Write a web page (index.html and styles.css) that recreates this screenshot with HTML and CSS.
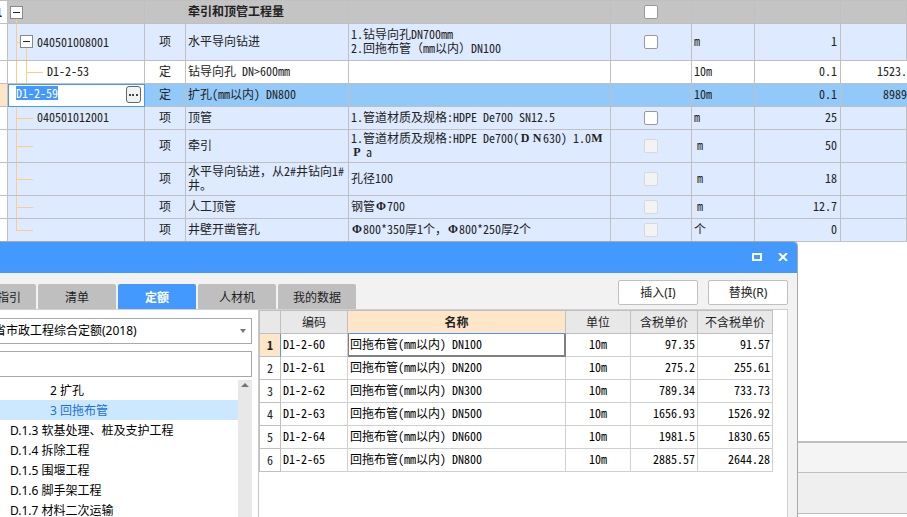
FILE: index.html
```html
<!DOCTYPE html>
<html lang="zh-CN">
<head>
<meta charset="utf-8">
<title>牵引和顶管工程量</title>
<link rel="stylesheet" href="styles.css">
</head>
<body>
<main class="sheet-area">
<table class="grid sheet">
<colgroup><col class="c-gutter"><col class="c-code"><col class="c-kind"><col class="c-name"><col class="c-spec"><col class="c-check"><col class="c-unit"><col class="c-qty"><col class="c-price"></colgroup>
<tbody>
<tr class="group"><th class="gutter">1</th><td class="tree root"><button class="toggle" aria-label="折叠"></button></td><td></td><td>牵引和顶管工程量</td><td></td><td class="check"><input type="checkbox" aria-label="牵引和顶管工程量"></td><td></td><td></td><td></td></tr>
<tr class="tall"><th class="gutter"></th><td class="tree branch-open"><button class="toggle nested" aria-label="折叠"></button><span>040501008001</span></td><td class="mid">项</td><td>水平导向钻进</td><td>1.钻导向孔DN700mm<br>2.回拖布管<span class="full">（</span>mm以内<span class="full">）</span>DN100</td><td class="check"><input type="checkbox" aria-label="水平导向钻进"></td><td>m</td><td class="num">1</td><td></td></tr>
<tr class="plain"><th class="gutter"></th><td class="tree leaf-deep">D1-2-53</td><td class="mid">定</td><td>钻导向孔 DN&gt;600mm</td><td></td><td></td><td>10m</td><td class="num">0.1</td><td class="price">1523.</td></tr>
<tr class="current"><th class="gutter"></th><td class="editing"><div class="editor"><input class="code-input" type="text" value="D1-2-59" aria-label="编码"><button class="more" aria-label="选择"><svg viewBox="0 0 15 17" width="15" height="17"><path d="M3 8h2v2H3zM6 8h2v2H6zM10 8h2v2h-2z" fill="#444"/></svg></button></div></td><td class="mid">定</td><td>扩孔(mm以内) DN800</td><td></td><td></td><td>10m</td><td class="num">0.1</td><td class="price">8989</td></tr>
<tr><th class="gutter"></th><td class="tree leaf">040501012001</td><td class="mid">项</td><td>顶管</td><td>1.管道材质及规格:HDPE De700 SN12.5</td><td class="check"><input type="checkbox" aria-label="顶管"></td><td>m</td><td class="num">25</td><td></td></tr>
<tr class="double"><th class="gutter"></th><td class="tree leaf"></td><td class="mid">项</td><td>牵引</td><td>1.管道材质及规格:HDPE De700(<b class="wide">D</b><b class="wide">N</b>630) 1.0<b class="wide">M</b><br><b class="wide">P</b><span class="wide-plain">a</span></td><td class="check"><input type="checkbox" disabled aria-label="牵引"></td><td><span class="wide-plain">m</span></td><td class="num">50</td><td></td></tr>
<tr class="double"><th class="gutter"></th><td class="tree leaf"></td><td class="mid">项</td><td>水平导向钻进<span class="full">，</span>从2#井钻向1#<br>井。</td><td>孔径100</td><td class="check"><input type="checkbox" disabled aria-label="水平导向钻进"></td><td><span class="wide-plain">m</span></td><td class="num">18</td><td></td></tr>
<tr><th class="gutter"></th><td class="tree leaf"></td><td class="mid">项</td><td>人工顶管</td><td>钢管<b class="wide">Φ</b>700</td><td class="check"><input type="checkbox" disabled aria-label="人工顶管"></td><td><span class="wide-plain">m</span></td><td class="num">12.7</td><td></td></tr>
<tr><th class="gutter"></th><td class="tree leaf last"></td><td class="mid">项</td><td>井壁开凿管孔</td><td><b class="wide">Φ</b>800*350厚1个<span class="full">，</span><b class="wide">Φ</b>800*250厚2个</td><td class="check"><input type="checkbox" disabled aria-label="井壁开凿管孔"></td><td>个</td><td class="num">0</td><td></td></tr>
</tbody>
</table>
</main>
<footer class="status">
<div class="status-tabs"></div>
<div class="status-tools"></div>
</footer>

<section class="dialog" role="dialog" aria-label="定额">
<header class="titlebar">
<button class="win-btn" aria-label="最大化"><svg width="10" height="8" viewBox="0 0 10 8"><path d="M1 1h8v6H1z" fill="none" stroke="#fff" stroke-width="2"/></svg></button>
<button class="win-btn" aria-label="关闭"><svg width="10" height="8" viewBox="0 0 10 8"><path d="M1 0l8 8M9 0L1 8" fill="none" stroke="#fff" stroke-width="2"/></svg></button>
</header>
<div class="toolbar">
<nav class="tabs"><button class="tab first">指引</button><button class="tab">清单</button><button class="tab active">定额</button><button class="tab">人材机</button><button class="tab">我的数据</button></nav>
<div class="actions"><button class="action">插入(I)</button><button class="action">替换(R)</button></div>
</div>
<div class="panes">
<aside class="side">
<div class="field"><select aria-label="定额库"><option>省市政工程综合定额(2018)</option></select><svg class="caret" width="6" height="4" viewBox="0 0 6 4"><path d="M0 0h6L3 4z" fill="#777"/></svg></div>
<input class="search" type="text" aria-label="搜索">
<div class="tree-box">
<ul class="outline">
<li class="child">2 扩孔</li>
<li class="child selected">3 回拖布管</li>
<li>D.1.3 软基处理、桩及支护工程</li>
<li>D.1.4 拆除工程</li>
<li>D.1.5 围堰工程</li>
<li>D.1.6 脚手架工程</li>
<li>D.1.7 材料二次运输</li>
</ul>
<div class="scroll"><svg width="8" height="4" viewBox="0 0 8 4"><path d="M0 4h8L4 0z" fill="#74747e"/></svg></div>
</div>
</aside>
<div class="results">
<table class="grid quota">
<colgroup><col class="q-no"><col class="q-code"><col class="q-name"><col class="q-unit"><col class="q-tax"><col class="q-net"></colgroup>
<thead><tr><th></th><th>编码</th><th class="sorted">名称</th><th>单位</th><th>含税单价</th><th>不含税单价</th></tr></thead>
<tbody>
<tr class="picked"><th>1</th><td>D1-2-60</td><td class="focus">回拖布管(mm以内) DN100</td><td class="mid">10m</td><td class="num">97.35</td><td class="num">91.57</td></tr>
<tr><th>2</th><td>D1-2-61</td><td>回拖布管(mm以内) DN200</td><td class="mid">10m</td><td class="num">275.2</td><td class="num">255.61</td></tr>
<tr><th>3</th><td>D1-2-62</td><td>回拖布管(mm以内) DN300</td><td class="mid">10m</td><td class="num">789.34</td><td class="num">733.73</td></tr>
<tr><th>4</th><td>D1-2-63</td><td>回拖布管(mm以内) DN500</td><td class="mid">10m</td><td class="num">1656.93</td><td class="num">1526.92</td></tr>
<tr><th>5</th><td>D1-2-64</td><td>回拖布管(mm以内) DN600</td><td class="mid">10m</td><td class="num">1981.5</td><td class="num">1830.65</td></tr>
<tr><th>6</th><td>D1-2-65</td><td>回拖布管(mm以内) DN800</td><td class="mid">10m</td><td class="num">2885.57</td><td class="num">2644.28</td></tr>
</tbody>
</table>
</div>
</div>
</section>
</body>
</html>
```
FILE: styles.css
```css
:root {
  --line: #c0c0c0;
  --blue: #4499ff;
  --peach: #ffe6c8;
  --guide: linear-gradient(#ffcc80, #ffcc80);
}
* { box-sizing: border-box; }
html, body { height: 100%; }
body {
  margin: 0;
  overflow: hidden;
  display: flex;
  flex-direction: column;
  background: #fff;
  color: #222;
  font: 12px/14px "Noto Sans CJK SC", sans-serif;
}
button, input, select { font: inherit; color: inherit; margin: 0; }

/* Shared grid */
.grid {
  width: 100%;
  table-layout: fixed;
  border-collapse: separate;
  border-spacing: 0;
  font-feature-settings: "hwid" 1;
}
.grid th, .grid td {
  height: 23px;
  padding: 0 2px 2px;
  border: 0 solid var(--line);
  border-width: 0 1px 1px 0;
  text-align: left;
  vertical-align: middle;
  font-weight: 400;
  white-space: nowrap;
  overflow: hidden;
}
.grid .mid { text-align: center; }
.grid .num { text-align: right; padding-right: 3px; }

/* Bill sheet */
.sheet-area { flex: 1; }
.sheet { border-top: 1px solid var(--line); }
.c-gutter { width: 8px; }
.c-code { width: 137px; }
.c-kind { width: 41px; }
.c-name { width: 163px; }
.c-check { width: 81px; }
.c-unit { width: 63px; }
.c-qty { width: 86px; }
.c-price { width: 66px; }
.sheet td { background-color: #deeaff; }
.sheet .gutter { padding: 0; text-indent: -4px; background: #fff; font-weight: 700; }
.sheet .group td { background-color: #c4c4c4; font-weight: 700; }
.sheet .plain td { background-color: #fff; }
.sheet .current td { background-color: #93c9f8; }
.sheet .current .gutter { background: var(--peach); }
.sheet .tall td { height: 37px; }
.sheet .double td { height: 33px; }
.sheet .price { padding: 0 0 2px; border-right: 0; text-align: right; }
.sheet .check { padding: 0; }

.sheet .tree { background-repeat: no-repeat; }
.root {
  background-image: var(--guide);
  background-position: 8px 100%;
  background-size: 1px 50%;
}
.branch-open {
  background-image: var(--guide), var(--guide), var(--guide);
  background-position: 8px 0, 8px 50%, 18px 100%;
  background-size: 1px 100%, 5px 1px, 1px 50%;
}
.leaf-deep {
  background-image: var(--guide), var(--guide), var(--guide);
  background-position: 8px 0, 18px 50%, 18px 0;
  background-size: 1px 100%, 17px 1px, 1px 100%;
}
.leaf {
  background-image: var(--guide), var(--guide);
  background-position: 8px 0, 8px 50%;
  background-size: 1px 100%, 17px 1px;
}
.last { background-size: 1px 50%, 17px 1px; }
.sheet .leaf { padding-left: 29px; }
.sheet .leaf-deep { padding-left: 39px; }
.branch-open span { vertical-align: middle; }
.toggle {
  width: 13px;
  height: 13px;
  padding: 0;
  border: 1px solid #888;
  border-radius: 0;
  vertical-align: middle;
  background: linear-gradient(#222, #222) 50% 50% / 7px 1px no-repeat #fff;
}
.toggle.nested { margin: 0 4px 0 10px; }
.sheet input[type="checkbox"] {
  appearance: none;
  display: block;
  width: 14px;
  height: 14px;
  margin: 0 auto;
  border: 1px solid #999;
  border-radius: 2px;
  background: #fff;
}
.sheet input[type="checkbox"]:disabled { border-color: #d8d8d8; background: #f3f3f3; }

.sheet .editing { padding: 0; border-color: var(--blue); }
.editor {
  display: flex;
  height: 22px;
  padding: 2px 3px 3px 8px;
  background: #fff;
  box-shadow: inset 1px 1px 0 var(--blue);
}
.code-input {
  flex: 1;
  min-width: 0;
  height: 14px;
  padding: 0;
  border: 0;
  outline: 0;
  color: #fff;
  font-feature-settings: "hwid" 1;
  background: linear-gradient(var(--blue), var(--blue)) 0 0 / 42px 100% no-repeat #fff;
}
.more {
  width: 15px;
  height: 17px;
  padding: 0;
  border: 1px solid #666;
  border-radius: 3px;
  background: #f2f2f2;
}
.more svg { display: block; margin: -1px; }
.full { font-feature-settings: normal; }
.wide, .wide-plain {
  display: inline-block;
  width: 12px;
  height: 14px;
  text-align: center;
  vertical-align: top;
}
.wide { font-family: "Liberation Serif", serif; font-weight: 700; }

/* Bottom strips */
.status { height: 76px; border-top: 2px solid #bfbfbf; }
.status-tabs { height: 30px; background: #f4f4f4; border-bottom: 1px solid #bfbfbf; }
.status-tools { height: 41px; background: #efefef; border-bottom: 1px solid #bfbfbf; }

/* Floating lookup window */
.dialog {
  position: absolute;
  top: 241px;
  bottom: 0;
  left: -42px;
  right: 109px;
  display: flex;
  flex-direction: column;
  border: 1px solid #a8a8a8;
  border-width: 1px 1px 0 0;
  border-radius: 0 5px 0 0;
  overflow: hidden;
  background: #f2f2f2;
}
.titlebar {
  display: flex;
  justify-content: flex-end;
  align-items: center;
  gap: 6px;
  height: 31px;
  padding: 0 4px 2px 0;
  background: var(--blue);
}
.win-btn {
  display: flex;
  justify-content: center;
  align-items: center;
  width: 20px;
  height: 20px;
  padding: 0;
  border: 0;
  background: none;
}
.toolbar {
  display: flex;
  justify-content: space-between;
  height: 36px;
  padding-right: 9px;
}
.tabs { display: flex; gap: 2px; align-items: flex-end; }
.tab {
  width: 78px;
  height: 25px;
  padding: 0;
  border: 0;
  border-radius: 2px 2px 0 0;
  background: #bfbfbf;
}
.tab.first { padding-right: 15px; text-align: right; }
.tab.active { background: var(--blue); color: #fff; font-weight: 700; }
.actions { display: flex; gap: 10px; padding-top: 7px; }
.action {
  width: 80px;
  height: 25px;
  padding: 0;
  border: 1px solid #c0c0c0;
  border-radius: 2px;
  background: #fff;
}
.action, .outline, .field select { font-family: "Noto Sans", "Noto Sans CJK SC", sans-serif; }
.panes {
  flex: 1;
  display: flex;
  min-height: 0;
  margin-right: 9px;
  border: 1px solid #d0d0d0;
  border-width: 1px 1px 0 0;
  background: #fff;
}
.side {
  display: flex;
  flex-direction: column;
  width: 300px;
  padding: 8px 6px 0 32px;
  color: #000;
}
.field { display: grid; align-items: center; }
.field select, .field .caret { grid-area: 1 / 1; }
.field select {
  appearance: none;
  width: 100%;
  height: 26px;
  padding: 0 3px;
  border: 1px solid #a8a8a8;
  border-radius: 0;
  background: #fff;
}
.field .caret { justify-self: end; margin-right: 6px; }
.search { height: 26px; margin: 7px 0 3px; border: 1px solid #a8a8a8; background: #fff; }
.tree-box { flex: 1; display: flex; min-height: 0; }
.outline { flex: 1; margin: 0; padding: 0; list-style: none; overflow: hidden; }
.outline li { height: 20px; line-height: 22px; padding-left: 20px; white-space: nowrap; }
.outline .child { padding-left: 60px; }
.outline .selected { background: #cce8ff; color: #1a6fe0; }
.scroll { width: 14px; padding: 3px; background: #e8e8e8; }
.scroll svg { display: block; }
.results { flex: 1; min-width: 0; padding-right: 14px; border-left: 1px solid #c8c8c8; }

.quota { color: #000; border-left: 1px solid var(--line); border-top: 1px solid var(--line); }
.q-no { width: 21px; }
.q-code { width: 67px; }
.q-unit { width: 65px; }
.q-tax { width: 67px; }
.q-net { width: 75px; }
.quota th { padding: 0; text-align: center; color: #222; }
.quota thead th { background: #e8e8e8; }
.quota thead .sorted { background: var(--peach); border-bottom-color: var(--blue); font-weight: 700; }
.quota tbody td { border-color: #d0d0d0; }
.grid.quota .num { padding-right: 2px; }
.quota .picked th { background: var(--peach); border-right-color: var(--blue); font-weight: 700; }
.quota td.focus { box-shadow: inset 1px 0 0 #808080, inset 0 -1px 0 #808080, inset -1px 0 0 #808080; border-color: #808080; }
```
